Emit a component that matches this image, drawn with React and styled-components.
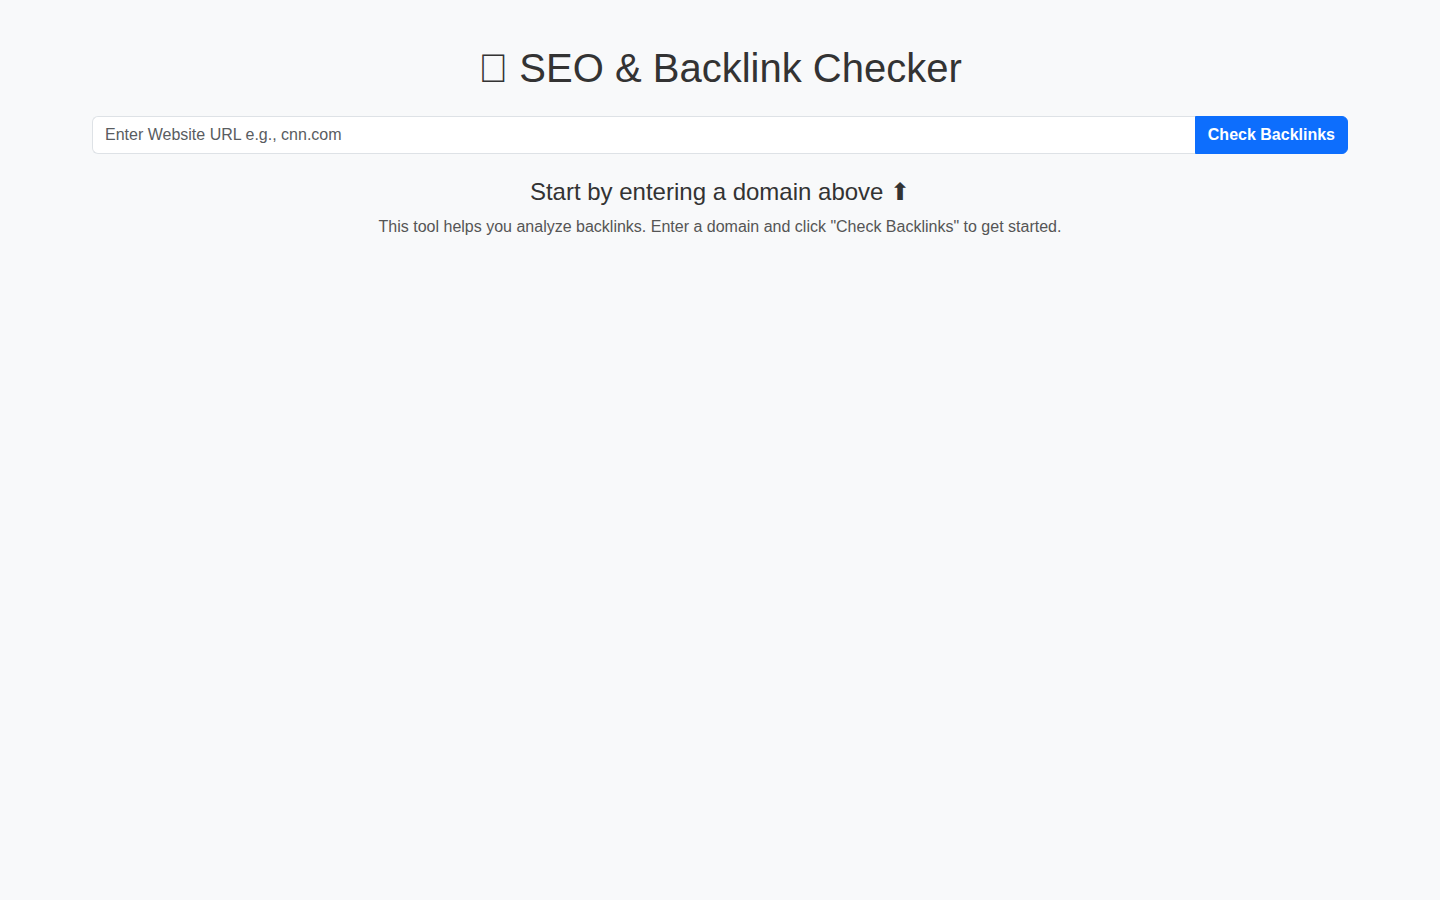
import React, { useState } from 'react'
import styled, { createGlobalStyle } from "styled-components";

const GlobalStyle = createGlobalStyle`
  * { box-sizing: border-box; }
  body {
    margin: 0;
    background: #f8f9fa;
    font-family: "Liberation Sans", Arial, sans-serif;
    color: #333;
  }
`;

const Container = styled.div`
  max-width: 1280px;
  margin: 0 auto;
  padding: 44px 12px 0;
  text-align: center;
`;

const Title = styled.h1`
  font-size: 40px;
  font-weight: 400;
  line-height: 1.2;
  margin: 0 0 24px;
  color: #333;
`;

const TitleIcon = styled.span`
  font-family: "Liberation Sans";
`;

const SearchRow = styled.form`
  display: flex;
  width: 100%;
`;

const Input = styled.input`
  flex: 1;
  height: 38px;
  padding: 6px 12px;
  font-size: 16px;
  font-family: inherit;
  color: #212529;
  background: #fff;
  border: 1px solid #dee2e6;
  border-right: none;
  border-radius: 6px 0 0 6px;
  outline: none;

  &::placeholder {
    color: #595c5f;
  }
`;

const Button = styled.button`
  height: 38px;
  padding: 6px 12px;
  font-size: 16px;
  font-weight: 700;
  font-family: inherit;
  color: #fff;
  background: #0d6efd;
  border: 1px solid #0d6efd;
  border-radius: 0 6px 6px 0;
  cursor: pointer;
`;

const Heading = styled.h4`
  font-size: 24px;
  font-weight: 400;
  line-height: 1.2;
  margin: 24px 0 8px;
  color: #333;
`;

const Hint = styled.p`
  font-size: 16px;
  line-height: 1.5;
  margin: 0;
  color: #555;
`;

const App = () => {
  const [url, setUrl] = useState("");
  return (
    <>
      <GlobalStyle />
      <Container>
        <Title><TitleIcon>{"\u{10FFFD}"}</TitleIcon> SEO &amp; Backlink Checker</Title>
        <SearchRow onSubmit={(e) => e.preventDefault()}>
          <Input
            value={url}
            onChange={(e) => setUrl(e.target.value)}
            placeholder="Enter Website URL e.g., cnn.com"
          />
          <Button type="submit">Check Backlinks</Button>
        </SearchRow>
        <Heading>Start by entering a domain above ⬆</Heading>
        <Hint>
          This tool helps you analyze backlinks. Enter a domain and click "Check Backlinks" to get started.
        </Hint>
      </Container>
    </>
  )
}

export default App
